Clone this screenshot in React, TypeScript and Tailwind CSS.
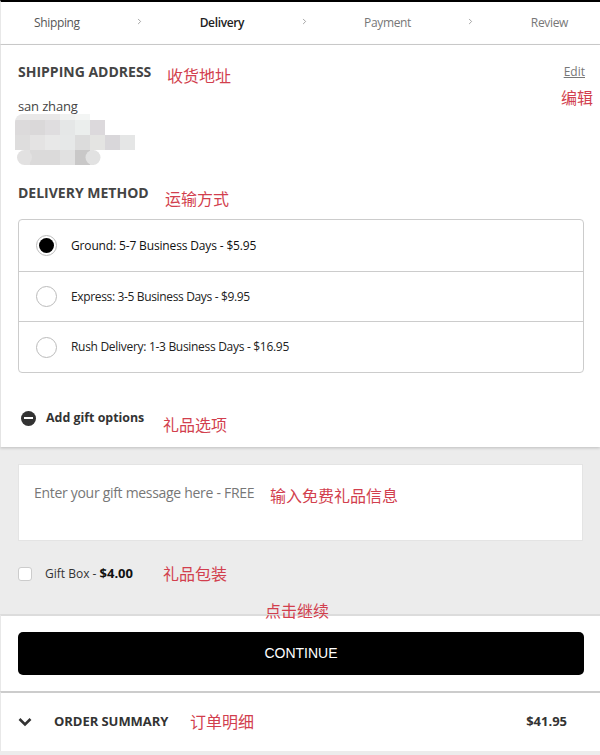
import { ChevronRight } from "lucide-react";

const cjk = "font-['Noto_Sans_CJK_SC',sans-serif]";

const steps = [
  { label: "Shipping", cls: "text-[#555] tracking-[-0.35px]" },
  { label: "Delivery", cls: "text-[#222] font-semibold tracking-[-0.35px]" },
  { label: "Payment", cls: "text-[#777] tracking-[-0.35px]" },
  { label: "Review", cls: "text-[#777] tracking-[-0.35px]" },
];

const methods = [
  { label: "Ground: 5-7 Business Days - $5.95", checked: true, h: "h-[51px]", cls: "text-[#111] font-medium tracking-[-0.15px]" },
  { label: "Express: 3-5 Business Days - $9.95", checked: false, h: "h-[50px]", cls: "text-[#222] tracking-[-0.35px]" },
  { label: "Rush Delivery: 1-3 Business Days - $16.95", checked: false, h: "h-[51px]", cls: "text-[#222] tracking-[-0.3px]" },
];

const mosaic: [number, number, number, number, string][] = [
  [0, 0, 75, 6, "#e9e8e8"], [45, 0, 15, 6, "#f0f2f1"], [60, 0, 15, 6, "#f3f5f4"],
  [0, 6, 15, 15, "#dcdadb"], [15, 6, 15, 15, "#dad8d9"], [30, 6, 15, 15, "#dfdddf"], [45, 6, 15, 15, "#e5e7e7"], [60, 6, 15, 15, "#ebeeed"], [75, 6, 15, 15, "#dcd9dc"],
  [0, 21, 15, 15, "#dedddd"], [15, 21, 15, 15, "#e4e3e3"], [30, 21, 15, 15, "#e8e8e8"], [45, 21, 15, 15, "#e6e8e8"], [60, 21, 15, 15, "#dcdcdc"], [75, 21, 15, 15, "#e4e4e2"], [90, 21, 15, 15, "#d9d7da"], [105, 21, 15, 15, "#e5e6e6"],
  [9, 36, 6, 15, "#e2e1e1"], [15, 36, 30, 15, "#dbdada"], [45, 36, 15, 15, "#e1e1e1"], [60, 36, 15, 15, "#c9c8c8"], [75, 36, 4, 15, "#e2e2e2"],
];

// red notes written over the screenshot
const Note = ({ text, className }: { text: string; className: string }) => (
  <span className={`absolute ${cjk} text-[16px] leading-[22px] font-normal whitespace-nowrap text-[#d23f4e] ${className}`}>
    {text}
  </span>
);

const Radio = ({ checked }: { checked: boolean }) => (
  <span className="w-[21px] h-[21px] rounded-full border border-[#bbb] bg-white flex items-center justify-center shrink-0">
    {checked && <span className="w-[15px] h-[15px] rounded-full bg-black" />}
  </span>
);

export default function App() {
  return (
    <div className="relative w-[600px] h-[755px] overflow-hidden bg-[#ececec] font-['Open_Sans',sans-serif] text-[12px]">
      <div className="bg-white border-t-2 border-black h-[45px] border-b border-b-[#cfcfcf] border-l border-l-[#e8e8e8] flex items-center justify-between pl-[33px] pr-[32px]">
        {steps.map((s, i) => (
          <div key={s.label} className="contents">
            <span className={`${s.cls} whitespace-nowrap`}>{s.label}</span>
            {i < 3 && <ChevronRight className="text-[#888] mb-[3px]" size={9} />}
          </div>
        ))}
      </div>

      <div className="bg-white h-[402px] border-l border-[#e4e4e4] pl-[17px] pr-[15px] pt-[17px] shadow-[0_1px_3px_rgba(0,0,0,0.2)] relative">
        <div className="flex justify-between">
          <h2 className="text-[14px] leading-[20px] font-bold text-[#444]">SHIPPING ADDRESS</h2>
          <a className="text-[12px] leading-[20px] text-[#777] underline">Edit</a>
        </div>
        <p className="text-[13px] leading-[20px] text-[#444] mt-[14px] tracking-[-0.15px]">san zhang</p>
        <svg width="120" height="51" className="block -ml-[3px] -mt-[2px] rounded-tl-[8px]">
          {mosaic.map(([x, y, w, h, fill], i) => (
            <rect key={i} x={x} y={y} width={w} height={h} fill={fill} />
          ))}
          <circle cx="9.5" cy="43.5" r="7.5" fill="#e2e1e1" />
          <circle cx="78" cy="43.5" r="7.5" fill="#e2e2e2" />
        </svg>
        <h2 className="text-[14px] leading-[20px] font-bold text-[#444] mt-[18px]">DELIVERY METHOD</h2>
        <div className="mt-[16px] border border-[#ccc] rounded-[4px] w-[566px]">
          {methods.map((m, i) => (
            <div key={m.label} className={`${m.h} flex items-center pl-[17px] gap-[14px] ${i > 0 ? "border-t border-[#ccc]" : ""}`}>
              <Radio checked={m.checked} />
              <span className={m.cls}>{m.label}</span>
            </div>
          ))}
        </div>
        <div className="flex items-center mt-[36px] pl-[3px] gap-[10px]">
          <span className="w-[15px] h-[15px] rounded-full bg-[#333] flex items-center justify-center">
            <span className="w-[9px] h-[2px] bg-white" />
          </span>
          <span className="text-[12.4px] font-bold text-[#333]">Add gift options</span>
        </div>
      </div>

      <div className="pl-[18px] pr-[17px] pt-[17px] h-[167px]">
        <div className="h-[77px] bg-white border border-[#e4e4e4] pl-[15px] pt-[18px] text-[14px] leading-[20px] text-[#777] tracking-[-0.3px]">
          Enter your gift message here - FREE
        </div>
        <div className="flex items-center mt-[23px] gap-[13px]">
          <span className="w-[14px] h-[14px] bg-white border border-[#ccc] rounded-[3px]" />
          <span className="text-[#333]">
            Gift Box - <b className="text-[#111] text-[13px]">$4.00</b>
          </span>
        </div>
      </div>

      <div className="bg-white h-[78px] border-t-2 border-[#dcdcdc] border-l border-l-[#e8e8e8] pl-[17px] pt-[16px]">
        <button className="w-[566px] h-[43px] bg-black text-white rounded-[5px] text-[14px] font-['Liberation_Sans',sans-serif]">
          CONTINUE
        </button>
      </div>

      <div className="bg-white h-[60px] -mt-[1px] border-t-2 border-[#ccc] border-l border-l-[#e8e8e8] flex items-center pl-[17px] pr-[33px]">
        <svg width="14" height="10" viewBox="0 0 14 10" className="mr-[22px]">
          <path d="M1.5 2 7 7.5 12.5 2" fill="none" stroke="#333" strokeWidth="2.6" />
        </svg>
        <span className="text-[13px] font-bold text-[#333] tracking-[-0.05px]">ORDER SUMMARY</span>
        <span className="ml-auto text-[13px] font-bold text-[#333]">$41.95</span>
      </div>

      <Note text="收货地址" className="left-[167px] top-[64px]" />
      <Note text="编辑" className="left-[561px] top-[86px]" />
      <Note text="运输方式" className="left-[165px] top-[187px]" />
      <Note text="礼品选项" className="left-[163px] top-[413px]" />
      <Note text="输入免费礼品信息" className="left-[270px] top-[484px]" />
      <Note text="礼品包装" className="left-[163px] top-[562px]" />
      <Note text="点击继续" className="left-[265px] top-[599px]" />
      <Note text="订单明细" className="left-[190px] top-[710px]" />
    </div>
  );
}
